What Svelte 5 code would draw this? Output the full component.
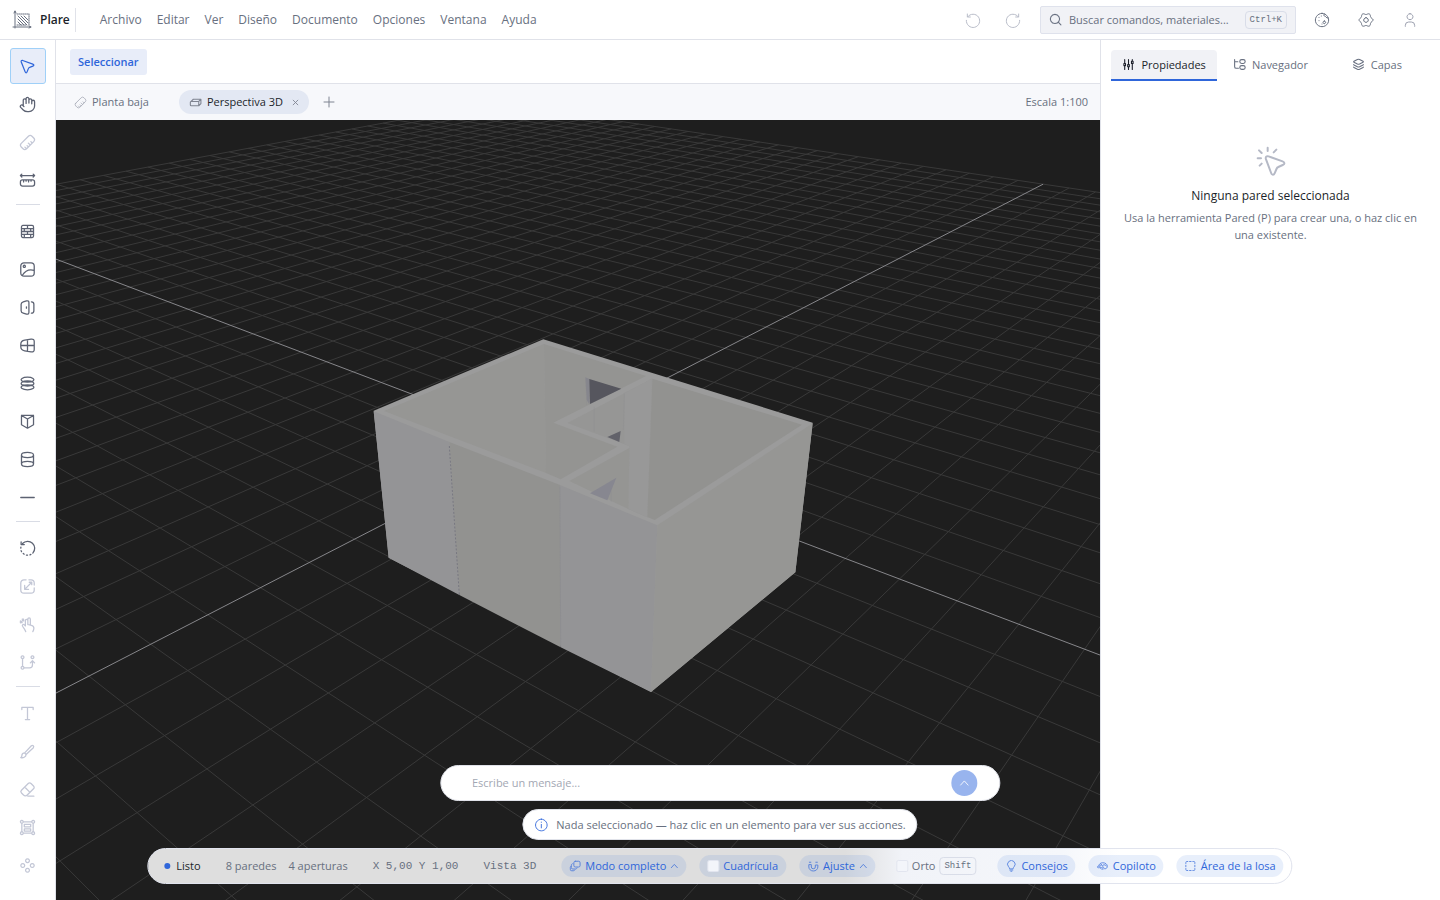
<script lang="ts">
  type Tool = { icon: string; label: string; off?: boolean };

  // six soft lobes around the hub
  const gearRim = Array.from({ length: 72 }, (_, i) => {
    const t = (i * Math.PI) / 36;
    const r = 9.3 + 1.1 * Math.cos(6 * t);
    return `${(12 + r * Math.cos(t)).toFixed(2)} ${(12 + r * Math.sin(t)).toFixed(2)}`;
  }).join('L');

  const icons: Record<string, string> = {
    cursor: 'M3.2 5.6C2.7 3.9 3.6 3 5.2 3.5L19.5 8.6C21.4 9.3 21.4 10.7 19.6 11.4L15 13.2C13.9 13.6 13.6 13.9 13.2 15L11.4 19.6C10.7 21.4 9.4 21.4 8.7 19.6Z',
    hand: 'M18 11V6a2 2 0 0 0-4 0M14 10V4a2 2 0 0 0-4 0v2M10 10.5V6a2 2 0 0 0-4 0v8M18 8a2 2 0 1 1 4 0v6a8 8 0 0 1-8 8h-2c-2.8 0-4.5-.86-5.99-2.34l-3.6-3.6a2 2 0 0 1 2.83-2.82L7 15',
    ruler: 'M3.2 13.3 13.3 3.2a3.6 3.6 0 0 1 5 0l2.5 2.5a3.6 3.6 0 0 1 0 5L10.7 20.8a3.6 3.6 0 0 1-5 0L3.2 18.3a3.6 3.6 0 0 1 0-5zM18.6 12.6l-1.8-1.8M15.9 15.6l-2.7-2.7M13.2 18.2l-1.8-1.8M9.8 20l-1.5-1.5',
    measure: 'M2 5h20M4 3 2 5l2 2M20 3l2 2-2 2M5 11h14a3 3 0 0 1 3 3v3a3 3 0 0 1-3 3H5a3 3 0 0 1-3-3v-3a3 3 0 0 1 3-3zM6.5 11v3M10 11v2M13.5 11v3M17 11v2',
    wall: 'M5.5 3.5h13a2 2 0 0 1 2 2v13a2 2 0 0 1-2 2h-13a2 2 0 0 1-2-2v-13a2 2 0 0 1 2-2zM3.5 8h17M3.5 12h17M3.5 16h17M12 3.5V8M7.5 8v4M16.5 8v4M12 12v4M7.5 16v4.5M16.5 16v4.5',
    image: 'M7 2.5h10a4.5 4.5 0 0 1 4.5 4.5v10a4.5 4.5 0 0 1-4.5 4.5H7A4.5 4.5 0 0 1 2.5 17V7A4.5 4.5 0 0 1 7 2.5zM7.5 6a1.5 1.5 0 1 0 .01 0zM4.5 20.5C8 15 13 10.5 21.3 13.3',
    door: 'M10.5 2.7 6 4C3.8 4.6 3 5.5 3 7.5v9c0 2 .8 2.9 3 3.5l4.5 1.3c2.3.6 3.5-.3 3.5-2.5V5.2c0-2.2-1.2-3.1-3.5-2.5zM10.5 11v2M17.5 4c2.5 0 3.5 1 3.5 3.5v9c0 2.5-1 3.5-3.5 3.5',
    window: 'M8 4.5 17 3c3-.4 4.5.6 4.5 3.5v11c0 2.9-1.5 3.9-4.5 3.5l-9-1.5c-4-.6-5.5-2.5-5.5-6v-3c0-3.5 1.5-5.4 5.5-6zM12 4v16M2.5 12h19',
    layers: 'M12 3a9 3.600 0 1 0 .01 0zM12 8.400a9 3.600 0 1 0 .01 0zM12 13.800a9 3.600 0 1 0 .01 0z',
    stack: 'M10 2.8 4.5 5.5C2.5 6.5 2.5 7.5 4.5 8.5L10 11.2c1.3.6 2.7.6 4 0l5.5-2.7c2-1 2-2 0-3L14 2.8c-1.3-.6-2.7-.6-4 0zM3 12c0 .6.5 1 1.5 1.5l5.5 2.7c1.3.6 2.7.6 4 0l5.5-2.7c1-.5 1.5-.9 1.5-1.5M3 16.500c0 .6.500 1 1.500 1.500l5.500 2.700c1.300.6 2.700.6 4 0l5.500-2.700c1-.5 1.500-.9 1.500-1.500',
    block: 'M3.5 3.5h17V16.5L12 21.5 3.5 16.5zM3.5 3.5 12 8.5l8.5-5M12 8.5v13',
    cylinder: 'M12 2c-4.7 0-8.5 1.6-8.5 3.7S7.3 9.4 12 9.4s8.500-1.600 8.500-3.700S16.700 2 12 2zM3.500 5.700v12.600c0 2.100 3.800 3.700 8.500 3.700s8.500-1.600 8.500-3.700V5.700M3.500 18.300c0-2.100 3.800-3.700 8.500-3.700s8.500 1.600 8.500 3.700',
    line: 'M2.5 12h19',
    rotate: 'M5 5a9.500 9.500 0 1 1 14.500 13.500M3 2.500V6.500h4.500M2.700 10l-.2 1.500M3 15l.6 1.500M6 19l1.300 1M10.500 21.300l1.500.2M15.500 21l1.300-.6',
    scale: 'M10 2.500H7A4.500 4.500 0 0 0 2.500 7v10A4.500 4.500 0 0 0 7 21.500h10a4.500 4.500 0 0 0 4.500-4.500v-3M14 2.500h3A4.500 4.500 0 0 1 21.500 7v3M8 16 18 6M8 10.500V16h5.500M14.500 6H18v3.500',
    touch: 'M9 14V6.500a1.700 1.700 0 0 1 3.500 0V12l5 1.200c2.500.6 3.500 1.600 3.500 4-.1 2-.6 3.300-1.500 4.800M9 14l-1.500-1.500c-1.700-1.400-3.400.2-2.500 2l3 4.500c.6 1 1.300 2 1.500 3M12.500 12V4.500a1.700 1.700 0 0 1 3.500 0V13M2 9.500 6.500 5M2 7v2.500h2.500M4.500 4.500h2V7',
    nodes: 'M5 2.500a2 2 0 1 0 .01 0zM5 17.500a2 2 0 1 0 .01 0zM19 2.500a2 2 0 1 0 .01 0zM5 6.500v11M7 19.500h8a4 4 0 0 0 4-4V10M16 12.500 19 9.500l3 3',
    text: 'M4 6.500V3.500h16v3M12 3.500v17M9 20.500h6',
    pencil: 'M8 14 17.500 3.800a2 2 0 0 1 2.800 2.800L10 16.200M8 14c-3 .2-4 1.800-4 4 0 1-.5 2-1.500 2.500 3 1 7.500-.5 7.500-4.300M8 14l2 2.200',
    eraser: 'M3.500 13 13 3.500c1.200-1.200 2.800-1.200 4 0l3.500 3.500c1.200 1.200 1.200 2.800 0 4L12 19.500c-2 2-4 2-6 0L3.500 17c-1.200-1.200-1.200-2.800 0-4zM8 8.500l7.500 7.500M12.500 21.500h8.500',
    group: 'M4 2a2 2 0 1 0 .01 0zM20 2a2 2 0 1 0 .01 0zM4 18a2 2 0 1 0 .01 0zM20 18a2 2 0 1 0 .01 0zM6 4h12M6 20h12M4 6v12M20 6v12M7.500 7.500h9v3.500h-9zM7.500 14h9v3h-9z',
    parts: 'M12 2.500a2.700 2.700 0 1 0 .01 0zM12 16a2.700 2.700 0 1 0 .01 0zM5.300 9.300a2.700 2.700 0 1 0 .01 0zM18.700 9.300a2.700 2.700 0 1 0 .01 0z',
    undo: 'M3.500 3v4.500H8M4 7.200A10 10 0 1 1 2 12.500',
    redo: 'M20.500 3v4.500H16M20 7.200A10 10 0 1 0 22 12.500',
    search: 'M11 2.500a8.500 8.500 0 1 0 .01 0zM17.500 17.500 22 22',
    theme: 'M12 2a10 10 0 1 0 .01 0zM15.500 2.800c-1.500 2-.5 3.500 1 3.500s1 3 5 3M15.500 13.500a2 2 0 1 0 .01 0zM7.500 8v.1M7.500 13v.1M12 18v.1M11 6v.1',
    settings: `M${gearRim}ZM12 8.500a3.500 3.500 0 1 0 .01 0z`,
    user: 'M12 2.500a4.500 4.500 0 1 0 .01 0zM5 21.500v-1.500a5 5 0 0 1 5-5h4a5 5 0 0 1 5 5v1.500',
    sliders: 'M5 3v7M5 14v7M12 3v9M12 16v5M19 3v3M19 10v11M3.500 10h3v4h-3zM10.500 12h3v4h-3zM17.500 6h3v4h-3z',
    tree: 'M3 3v13a3 3 0 0 0 3 3h4M3 7h6M16 3h3a2.500 2.500 0 0 1 0 7h-3a2.500 2.500 0 0 1 0-7zM16 14h3a2.500 2.500 0 0 1 0 7h-3a2.500 2.500 0 0 1 0-7z',
    click: 'M8.200 10.600c-.5-1.700.4-2.600 2-2.100l10.500 3.800c1.800.7 1.800 2 .1 2.700L17.500 16.500c-.8.300-1 .6-1.300 1.300l-1.400 3.300c-.7 1.700-2 1.700-2.700-.1zM9.500 2v2.500M3 4l2 2M16 3.500l-2 2M2 10h2.500M5 14l-1.500 1.500',
    box: 'M4 10 8 6h14l-4 4M4 10h14v8H4a1.500 1.500 0 0 1-1.500-1.500v-5A1.500 1.500 0 0 1 4 10zM18 18l4-4V6',
    copies: 'M12 2.500h6.500a3 3 0 0 1 3 3V11a3 3 0 0 1-3 3H12a3 3 0 0 1-3-3V5.500a3 3 0 0 1 3-3zM6 7.500c-1.500.5-2 1.500-2 3V15a3 3 0 0 0 3 3h5c1.800 0 3-.6 3.500-2M3 12.500c-1 .5-1.200 1.500-1.200 2.500v3.500a3 3 0 0 0 3 3H8c1.500 0 2.500-.5 3-1.500',
    magnet: 'M3 10v4a9 8 0 0 0 18 0v-4h-5v4a4 3.500 0 0 1-8 0v-4zM4 4.500h3M17 4.500h3',
    bulb: 'M8.500 17c-.2-1.500-1-2.300-2-3.400A7.500 7.500 0 1 1 17.500 13.600c-1 1.100-1.800 1.900-2 3.400zM9 20h6M11 22.500h2',
    copilot: 'M5 12c-2 0-3 1-3 2s1.500 2 4 1.500M5 12c0-4 3.500-6.500 8-6.500 5 0 9 3 9 7 0 3-2 5-4.500 5-2 0-3-1-3-2.500M10 9.500a3 3 0 1 0 .01 0zM14 10c2-1 5-.5 6 2M7 15l3 3M13 16v3',
    area: 'M3 7V5a2 2 0 0 1 2-2h2M10.500 3h3M17 3h2a2 2 0 0 1 2 2v2M21 10.500v3M21 17v2a2 2 0 0 1-2 2h-2M13.500 21h-3M7 21H5a2 2 0 0 1-2-2v-2M3 13.500v-3',
    up: 'M3 17 12 7l9 10',
    close: 'M4 4l16 16M20 4 4 20',
    plus: 'M12 2v20M2 12h20',
    info: 'M12 2a10 10 0 1 0 .01 0zM12 11v6M12 7v.5'
  };

  const menu = ['Archivo', 'Editar', 'Ver', 'Diseño', 'Documento', 'Opciones', 'Ventana', 'Ayuda'];

  const toolGroups: Tool[][] = [
    [
      { icon: 'cursor', label: 'Seleccionar' },
      { icon: 'hand', label: 'Desplazar' },
      { icon: 'ruler', label: 'Medir', off: true },
      { icon: 'measure', label: 'Cota' }
    ],
    [
      { icon: 'wall', label: 'Pared' },
      { icon: 'image', label: 'Imagen' },
      { icon: 'door', label: 'Puerta' },
      { icon: 'window', label: 'Ventana' },
      { icon: 'layers', label: 'Losa' },
      { icon: 'block', label: 'Bloque' },
      { icon: 'cylinder', label: 'Columna' },
      { icon: 'line', label: 'Línea' }
    ],
    [
      { icon: 'rotate', label: 'Rotar' },
      { icon: 'scale', label: 'Escalar', off: true },
      { icon: 'touch', label: 'Mover', off: true },
      { icon: 'nodes', label: 'Editar nodos', off: true }
    ],
    [
      { icon: 'text', label: 'Texto', off: true },
      { icon: 'pencil', label: 'Lápiz', off: true },
      { icon: 'eraser', label: 'Borrar', off: true },
      { icon: 'group', label: 'Agrupar', off: true },
      { icon: 'parts', label: 'Componentes', off: true }
    ]
  ];

  const sideTabs = [
    { icon: 'sliders', label: 'Propiedades' },
    { icon: 'tree', label: 'Navegador' },
    { icon: 'stack', label: 'Capas' }
  ];

  let activeTool = $state('Seleccionar');
  let activeTab = $state('Propiedades');
  let message = $state('');
  let showGrid = $state(false);
  let ortho = $state(false);

  // perspective of the ground plane: origin, two vanishing points, step per cell
  const origin = [485, 323];
  const vanishU = [-960, -225];
  const vanishV = [1548, -225];
  const stepU = 0.02485;
  const stepV = 0.02984;
  const half = 30;
  const near = 0.35;

  function project(u: number, v: number) {
    const a = u * stepU;
    const b = v * stepV;
    const w = 1 + a + b;
    const at = (i: number) => ((origin[i] + a * vanishU[i] + b * vanishV[i]) / w).toFixed(1);
    return `${at(0)} ${at(1)}`;
  }

  function gridLine(k: number, alongU: boolean) {
    const own = alongU ? stepU : stepV;
    const other = alongU ? stepV : stepU;
    const start = Math.max(-half, (near - 1 - k * other) / own);
    if (alongU) return `M${project(start, k)}L${project(half, k)}`;
    return `M${project(k, start)}L${project(k, half)}`;
  }

  const steps = Array.from({ length: half * 2 + 1 }, (_, i) => i - half);
  const gridPath = steps
    .filter((k) => k !== 0)
    .map((k) => gridLine(k, true) + gridLine(k, false))
    .join('');
  const axisPath = gridLine(0, true) + gridLine(0, false);
</script>

{#snippet icon(name: string, size: number, weight = 1.5)}
  <svg class="icon" width={size} height={size} viewBox="0 0 24 24" stroke-width={weight} aria-hidden="true">
    <path d={icons[name]} />
  </svg>
{/snippet}

<div class="app">
  <header class="topbar">
    <div class="brand">
      <svg class="icon" width="20" height="20" viewBox="0 0 20 20" stroke-width="1" aria-hidden="true">
        <path d="M3 1v17M1 17h18M2 3l1-2 1 2M17 16l2 1-2 1" />
        <path d="M5 4h12M17 4v11M5 15h10" stroke-dasharray="1 1" />
        <path d="M6 12l3 3M6 9l6 6M6 6l9 9M9 6l7 7M12 6l4 4" />
      </svg>
      <strong>Plare</strong>
    </div>
    <nav class="menu">
      {#each menu as item}
        <button>{item}</button>
      {/each}
    </nav>
    <div class="top-actions">
      <button class="faint" aria-label="Deshacer">{@render icon('undo', 16)}</button>
      <button class="faint" aria-label="Rehacer">{@render icon('redo', 16)}</button>
    </div>
    <button class="search">
      {@render icon('search', 13, 2)}
      <span>Buscar comandos, materiales...</span>
      <kbd>Ctrl+K</kbd>
    </button>
    <div class="top-actions wide">
      <button aria-label="Tema">{@render icon('theme', 16)}</button>
      <button aria-label="Ajustes">{@render icon('settings', 16)}</button>
      <button class="soft" aria-label="Cuenta">{@render icon('user', 16)}</button>
    </div>
  </header>

  <aside class="tools">
    {#each toolGroups as group, i}
      {#if i > 0}<hr />{/if}
      {#each group as tool}
        <button
          class="tool"
          class:active={tool.label === activeTool}
          disabled={tool.off}
          aria-label={tool.label}
          onclick={() => (activeTool = tool.label)}
        >
          {@render icon(tool.icon, 17, 1.8)}
        </button>
      {/each}
    {/each}
  </aside>

  <main class="workspace">
    <div class="context"><span class="mode">{activeTool}</span></div>
    <div class="views">
      <button class="view">{@render icon('ruler', 13)}Planta baja</button>
      <div class="view current">
        {@render icon('box', 13, 2)}<span>Perspectiva 3D</span>
        <button class="close" aria-label="Cerrar vista">{@render icon('close', 7, 3)}</button>
      </div>
      <button class="add" aria-label="Nueva vista">{@render icon('plus', 12, 2)}</button>
      <span class="zoom">Escala 1:100</span>
    </div>
    <svg class="scene" viewBox="0 0 1044 780" preserveAspectRatio="xMidYMid slice" role="img" aria-label="Vista 3D">
      <path class="grid" d={gridPath} />
      <path class="axis" d={axisPath} />
      <!-- house, drawn at three units per pixel -->
      <g transform="translate(304 200) scale(.33333)">
        <path fill="#9b9b9b" d="M41 272 550 58 1358 308 1306 757 873 1116 86 713Z" />
        <path fill="#949496" d="M41 274 268 366 298 825 86 713Z" />
        <path fill="#929290" d="M268 366 600 495 602 982 298 825Z" />
        <path fill="#949496" d="M600 495 892 616 873 1116 602 982Z" />
        <path fill="#969694" d="M892 616 1358 310 1306 757 873 1116Z" />
        <path fill="#969694" d="M72 273 552 72 558 459Z" />
        <path fill="#949492" d="M552 72 858 168 580 308 772 380 602 478 558 459Z" />
        <path fill="#969695" d="M622 309 876 176 862 592 805 567 808 378Z" />
        <path fill="#989898" d="M794 219 876 176 862 592 805 567 808 378 793 372Z" />
        <path fill="#959593" d="M628 483 808 384 805 567Z" />
        <path fill="#929290" d="M877 176 1326 314 884 600 862 591Z" />
        <path fill="#86868d" d="M676 172 690 178 688 253 680 240Z" />
        <path fill="#56565e" d="M688 177 784 206 690 252Z" />
        <path fill="#62626a" d="M742 351 782 333 778 366Z" />
        <path fill="#878790" d="M690 520 769 473 742 541Z" />
        <path fill="none" stroke="#8b8b90" d="M703 260V335M793 220 790 330M754 505V545M678 182 680 255" />
        <path fill="none" stroke="#777781" stroke-width="3" stroke-dasharray="6 5" d="M268 378 298 825" />
        <path fill="none" stroke="#8b8b90" stroke-width="2" d="M600 500 602 980" />
      </g>
    </svg>
  </main>

  <aside class="panel">
    <div class="tabs" role="tablist">
      {#each sideTabs as tab}
        <button
          role="tab"
          aria-selected={tab.label === activeTab}
          class:active={tab.label === activeTab}
          onclick={() => (activeTab = tab.label)}
        >
          {@render icon(tab.icon, 13, 2)}{tab.label}
        </button>
      {/each}
    </div>
    <div class="empty">
      {@render icon('click', 32)}
      <h2>Ninguna pared seleccionada</h2>
      <p>Usa la herramienta Pared (P) para crear una, o haz clic en una existente.</p>
    </div>
  </aside>

  <div class="dock">
    <form class="chat" onsubmit={(e) => e.preventDefault()}>
      <input type="text" aria-label="Mensaje" placeholder="Escribe un mensaje..." bind:value={message} />
      <button aria-label="Enviar">{@render icon('up', 10, 2)}</button>
    </form>
    <div class="hint">{@render icon('info', 14)}Nada seleccionado — haz clic en un elemento para ver sus acciones.</div>
    <div class="status">
      <span class="ready">Listo</span>
      <span class="counts"><span>8 paredes</span><span>4 aperturas</span></span>
      <span class="mono">X 5,00 Y 1,00</span>
      <span class="mono">Vista 3D</span>
      <div class="chips">
        <button class="chip">{@render icon('copies', 12, 2)}Modo completo{@render icon('up', 8, 3)}</button>
        <label class="chip"><input type="checkbox" bind:checked={showGrid} />Cuadrícula</label>
        <button class="chip">{@render icon('magnet', 12, 2)}Ajuste{@render icon('up', 8, 3)}</button>
        <label class="chip plain"><input type="checkbox" bind:checked={ortho} />Orto<kbd>Shift</kbd></label>
        <button class="chip">{@render icon('bulb', 12, 2)}Consejos</button>
        <button class="chip">{@render icon('copilot', 12, 2)}Copiloto</button>
        <button class="chip">{@render icon('area', 12, 2)}Área de la losa</button>
      </div>
    </div>
  </div>
</div>

<style>
  :global(body) {
    margin: 0;
  }

  .app {
    --blue: #2f66da;
    --text: #1b1f2a;
    --muted: #687080;
    --line: #e0e2e9;
    display: grid;
    grid-template-columns: 56px 1fr 340px;
    grid-template-rows: 40px 1fr;
    min-height: 100vh;
    position: relative;
    box-sizing: border-box;
    overflow: hidden;
    background: #fff;
    color: var(--muted);
    font: 11px/16px "Open Sans", "Noto Sans", sans-serif;
  }

  .app * {
    box-sizing: border-box;
  }

  button {
    display: flex;
    align-items: center;
    justify-content: center;
    padding: 0;
    border: 0;
    background: none;
    color: inherit;
    font: inherit;
    white-space: nowrap;
    cursor: pointer;
  }

  .icon {
    flex: none;
    fill: none;
    stroke: currentColor;
    stroke-linecap: round;
    stroke-linejoin: round;
  }

  kbd {
    padding: 0 4px;
    border: 1px solid #d9dde8;
    border-radius: 4px;
    font: 9px/16px "Liberation Mono", monospace;
  }

  .topbar {
    grid-column: 1 / -1;
    display: flex;
    align-items: center;
    border-bottom: 1px solid var(--line);
    font-size: 12px;
  }

  .brand {
    display: flex;
    align-items: center;
    gap: 8px;
    height: 24px;
    padding: 0 5px 0 12px;
    border-right: 1px solid var(--line);
  }

  .brand strong {
    color: var(--text);
    font-weight: 600;
  }

  .menu {
    display: flex;
    gap: 15px;
    margin: 0 auto 0 24px;
  }

  .top-actions {
    display: flex;
    gap: 24px;
    margin-right: 19px;
  }

  .top-actions.wide {
    gap: 28px;
    margin: 0 22px 0 18px;
  }

  .faint {
    color: #b9bdc9;
  }

  .soft {
    color: #9da1b0;
  }

  .search {
    gap: 7px;
    width: 256px;
    height: 28px;
    padding: 0 8px;
    border: 1px solid #dfe2ec;
    border-radius: 2px;
    background: #f1f2f6;
    font-size: 11px;
  }

  .search span {
    flex: 1;
    text-align: left;
  }

  .tools {
    display: flex;
    flex-direction: column;
    align-items: center;
    gap: 2px;
    padding-top: 8px;
    border-right: 1px solid var(--line);
  }

  .tools hr {
    width: 24px;
    margin: 4px 0 6px;
    border: 0;
    border-top: 1px solid #d9dce5;
  }

  .tool {
    width: 36px;
    height: 36px;
    border: 1px solid transparent;
    border-radius: 3px;
    color: #5c6272;
  }

  .tool:disabled {
    color: #c3c7d6;
  }

  .tool.active {
    border-color: #9fd0f8;
    background: #e8edf9;
    color: var(--blue);
  }

  .workspace {
    display: flex;
    flex-direction: column;
    min-width: 0;
  }

  .context {
    display: flex;
    align-items: center;
    height: 44px;
    padding: 0 14px;
    border-bottom: 1px solid var(--line);
  }

  .mode {
    padding: 5px 8px;
    border-radius: 3px;
    background: #e8edf9;
    color: var(--blue);
    font-weight: 600;
  }

  .views {
    display: flex;
    align-items: center;
    height: 36px;
    padding: 0 12px 0 18px;
    background: #f7f8fb;
  }

  .view {
    display: flex;
    align-items: center;
    gap: 5px;
  }

  .view .icon {
    color: #a5a9b5;
  }

  .current {
    height: 24px;
    margin: 0 14px 0 30px;
    padding: 0 10px;
    border-radius: 12px;
    background: #e3e8f3;
    color: var(--text);
    font-weight: 500;
  }

  .current .icon,
  .add {
    color: #7f8491;
  }

  .close {
    margin-left: 4px;
  }

  .zoom {
    margin-left: auto;
  }

  .scene {
    flex: 1;
    width: 100%;
    min-height: 0;
    background: #1e1e1e;
  }

  .grid {
    fill: none;
    stroke: #393939;
  }

  .axis {
    fill: none;
    stroke: #86868a;
  }

  .panel {
    border-left: 1px solid var(--line);
  }

  .tabs {
    display: grid;
    grid-template-columns: repeat(3, 1fr);
    padding: 10px 10px 0;
  }

  .tabs button {
    gap: 6px;
    height: 31px;
    border-bottom: 2px solid transparent;
    border-radius: 4px 4px 0 0;
    font-weight: 500;
  }

  .tabs .active {
    border-color: var(--blue);
    background: #f1f2f6;
    color: var(--text);
  }

  .empty {
    display: flex;
    flex-direction: column;
    align-items: center;
    padding: 64px 20px;
    text-align: center;
  }

  .empty .icon {
    color: #b5b9c6;
  }

  h2 {
    margin: 10px 0 4px;
    color: var(--text);
    font-size: 12px;
    font-weight: 400;
    line-height: 18px;
  }

  p {
    margin: 0;
    line-height: 17px;
  }

  .dock {
    position: absolute;
    bottom: 16px;
    left: 50%;
    transform: translateX(-50%);
    display: flex;
    flex-direction: column;
    align-items: center;
    gap: 8px;
  }

  .chat {
    display: flex;
    align-items: center;
    width: 560px;
    height: 36px;
    padding: 0 22px 0 31px;
    border: 1px solid var(--line);
    border-radius: 18px;
    background: #fff;
  }

  .chat input {
    flex: 1;
    padding: 0;
    border: 0;
    outline: 0;
    background: none;
    color: var(--text);
    font: inherit;
  }

  .chat input::placeholder {
    color: #a3a7b3;
  }

  .chat button {
    width: 26px;
    height: 26px;
    border-radius: 50%;
    background: #98b4ee;
    color: #fff;
  }

  .hint {
    display: flex;
    align-items: center;
    gap: 8px;
    height: 31px;
    padding: 0 11px;
    border: 1px solid var(--line);
    border-radius: 16px;
    background: #fff;
  }

  .hint .icon {
    color: var(--blue);
  }

  .status {
    display: flex;
    align-items: center;
    gap: 25px;
    height: 36px;
    padding: 0 8px 0 16px;
    border: 1px solid #e1e4ee;
    border-radius: 18px;
    background: linear-gradient(90deg, #dedede 61%, #f1f3f8 66%, #f5f7fb 80%, #fff 85%);
    white-space: nowrap;
  }

  .ready {
    display: flex;
    align-items: center;
    gap: 6px;
    color: var(--text);
    font-weight: 500;
  }

  .ready::before {
    content: "";
    width: 6px;
    height: 6px;
    border-radius: 50%;
    background: var(--blue);
  }

  .counts {
    display: flex;
    gap: 12px;
  }

  .mono {
    font-family: "Liberation Mono", monospace;
  }

  .chips {
    display: flex;
    gap: 13px;
  }

  .chip {
    display: flex;
    align-items: center;
    gap: 4px;
    height: 22px;
    padding: 0 8px;
    border-radius: 11px;
    background: rgba(49, 105, 220, 0.11);
    color: var(--blue);
    font-weight: 500;
  }

  .chip .icon {
    opacity: 0.7;
  }

  .chip input {
    appearance: none;
    width: 12px;
    height: 12px;
    margin: 0;
    border: 1px solid #e2e5ef;
    border-radius: 2px;
    background: #f3f5fa;
  }

  .chip input:checked {
    background: var(--blue);
  }

  .chip.plain {
    background: none;
    color: var(--muted);
    font-weight: 400;
  }
</style>
